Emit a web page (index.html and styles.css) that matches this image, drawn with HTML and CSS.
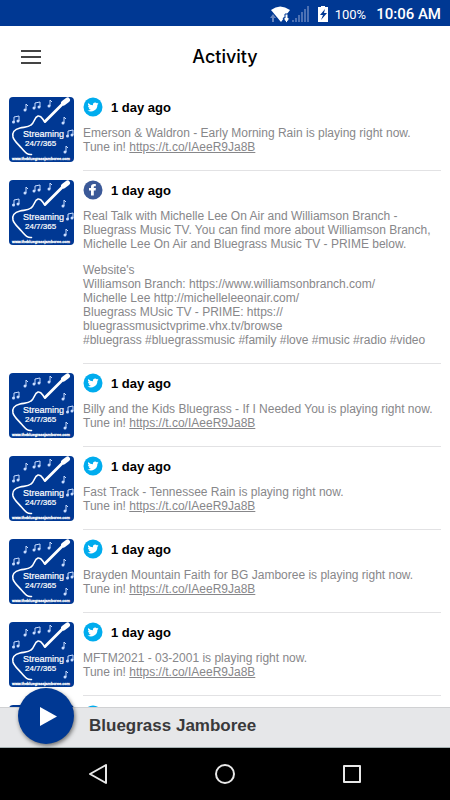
FILE: index.html
```html
<!DOCTYPE html>
<html lang="en">
<head>
<meta charset="utf-8">
<meta name="viewport" content="width=device-width, initial-scale=1">
<title>Activity</title>
<link rel="stylesheet" href="styles.css">
</head>
<body>
<svg class="sprite" aria-hidden="true">
  <symbol id="cover" viewBox="0 0 65 65">
    <rect width="65" height="65" fill="#003893"/>
    <g fill="none" stroke="#fff" stroke-linecap="round" stroke-linejoin="round">
      <path stroke-width="1.6" d="M22.500 57.500C18 58 16 55 12.700 51.300C9 47 5 44 4 40C3 35 5 32.500 11 31C15 30 19 30.500 22 28C26 25 25 20.500 29 19C33 18.500 33 22 36 25"/>
      <path stroke-width="2.800" d="M36 24.500L54 6.500"/>
      <path stroke-width="5" d="M54.500 6L58.500 3"/>
    </g>
    <g fill="none" stroke="#c8dcff" stroke-width="1">
      <path d="M17 13V7L19 9M26 11V6L31 5V10M41 9V3L43 5M5 25V20L10 19V24M55 26V20L57 22M59 39V34L64 33V38M57 55V49L59 51"/>
    </g>
    <g fill="#c8dcff">
      <circle cx="16" cy="13" r="1.500"/><circle cx="25" cy="11" r="1.500"/><circle cx="30" cy="10" r="1.500"/><circle cx="40" cy="9" r="1.500"/><circle cx="4.500" cy="25" r="1.500"/><circle cx="9" cy="24" r="1.500"/><circle cx="54" cy="26" r="1.500"/><circle cx="58.500" cy="39" r="1.500"/><circle cx="63" cy="38" r="1.500"/><circle cx="56" cy="55" r="1.500"/>
    </g>
    <g class="cover-text" fill="#fff" stroke="#fff">
      <text x="14" y="40" font-size="9" stroke-width=".2">Streaming</text>
      <text x="16" y="49" font-size="8" stroke-width=".2">24/7/365</text>
      <text x="3" y="63" font-size="4" stroke-width=".3">www.thebluegrassjamboree.com</text>
    </g>
  </symbol>
  <symbol id="twitter" viewBox="0 0 20 20">
    <circle cx="10" cy="10" r="9.500" fill="#00acee"/>
    <path fill="#fff" transform="translate(4.500 4.500) scale(.46)" d="M24 4.600a10 10 0 0 1-2.800.8 5 5 0 0 0 2.100-2.700 10 10 0 0 1-3.100 1.200 4.900 4.900 0 0 0-8.400 4.500A14 14 0 0 1 1.700 3.200a4.900 4.900 0 0 0 1.500 6.500A4.900 4.900 0 0 1 1 9.100a4.900 4.900 0 0 0 3.900 4.900 5 5 0 0 1-2.200.1 4.900 4.900 0 0 0 4.600 3.400A9.900 9.900 0 0 1 0 19.500 14 14 0 0 0 21.500 7.100 10 10 0 0 0 24 4.600z"/>
  </symbol>
  <symbol id="facebook" viewBox="0 0 20 20">
    <circle cx="10" cy="10" r="9.500" fill="#3b5998"/>
    <path fill="#fff" d="M8 15.500V10.500H6V8H8V6.800C8 4.800 9 4 11 4H12.800V6.300H11.700C11 6.300 10.800 6.500 10.800 7V8H12.900L12.600 10.500H10.800V15.500Z"/>
  </symbol>
</svg>
<div class="phone">
  <div class="status">
    <svg class="signals" viewBox="0 0 64 20" aria-hidden="true">
      <path fill="#fff" d="M0 6Q9-1 19 6L10 18Z"/>
      <path fill="#6684bd" d="M2 10L5 14H3V18H1V14H-1Z"/>
      <path stroke="#003893" stroke-width="1" fill="#fff" d="M14 10H17V14H19L15.500 19L12 14H14Z"/>
      <path fill="#4b70b3" d="M21 18V16H23V18ZM24 18V14H26V18ZM27 18V11H29V18ZM30 18V8H32V18ZM33 18V5H35V18ZM36 18V2H38V18Z"/>
      <path fill="#fff" d="M50 3V2H54V3H57V18H47V3Z"/>
      <path fill="#003893" d="M54 5L49 11H52L50 16L56 9H53Z"/>
    </svg>
    <span class="battery">100%</span>
    <span class="clock">10:06 AM</span>
  </div>
  <header class="bar">
    <button class="menu" type="button" aria-label="Menu"><svg viewBox="0 0 20 14"><path stroke="#444" stroke-width="2" d="M0 1H20M0 7H20M0 13H20"/></svg></button>
    <h1>Activity</h1>
  </header>
  <main class="feed">
    <article class="post"><svg class="cover"><use href="#cover"/></svg><div class="content"><div class="meta"><svg class="badge"><use href="#twitter"/></svg><time>1 day ago</time></div><p>Emerson &amp; Waldron - Early Morning Rain is playing right now.<br>Tune in! <a href="#">https://t.co/IAeeR9Ja8B</a></p></div></article>
    <article class="post"><svg class="cover"><use href="#cover"/></svg><div class="content"><div class="meta"><svg class="badge"><use href="#facebook"/></svg><time>1 day ago</time></div><p>Real Talk with Michelle Lee On Air and Williamson Branch - Bluegrass Music TV. You can find more about Williamson Branch, Michelle Lee On Air and Bluegrass Music TV - PRIME below.</p><p>Website's<br>Williamson Branch: https://www.williamsonbranch.com/<br>Michelle Lee http://michelleleeonair.com/<br>Bluegrass MUsic TV - PRIME: https://<br>bluegrassmusictvprime.vhx.tv/browse<br>#bluegrass #bluegrassmusic #family #love #music #radio #video</p></div></article>
    <article class="post"><svg class="cover"><use href="#cover"/></svg><div class="content"><div class="meta"><svg class="badge"><use href="#twitter"/></svg><time>1 day ago</time></div><p>Billy and the Kids Bluegrass - If I Needed You is playing right now.<br>Tune in! <a href="#">https://t.co/IAeeR9Ja8B</a></p></div></article>
    <article class="post"><svg class="cover"><use href="#cover"/></svg><div class="content"><div class="meta"><svg class="badge"><use href="#twitter"/></svg><time>1 day ago</time></div><p>Fast Track - Tennessee Rain is playing right now.<br>Tune in! <a href="#">https://t.co/IAeeR9Ja8B</a></p></div></article>
    <article class="post"><svg class="cover"><use href="#cover"/></svg><div class="content"><div class="meta"><svg class="badge"><use href="#twitter"/></svg><time>1 day ago</time></div><p>Brayden Mountain Faith for BG Jamboree is playing right now.<br>Tune in! <a href="#">https://t.co/IAeeR9Ja8B</a></p></div></article>
    <article class="post"><svg class="cover"><use href="#cover"/></svg><div class="content"><div class="meta"><svg class="badge"><use href="#twitter"/></svg><time>1 day ago</time></div><p>MFTM2021 - 03-2001 is playing right now.<br>Tune in! <a href="#">https://t.co/IAeeR9Ja8B</a></p></div></article>
    <article class="post"><svg class="cover" viewBox="0 0 65 65"><rect width="65" height="65" fill="#003893"/></svg><div class="content"><div class="meta"><svg class="badge"><use href="#twitter"/></svg></div></div></article>
  </main>
  <footer class="player">
    <button class="play" type="button" aria-label="Play"><svg viewBox="0 0 56 56"><path fill="#fff" d="M22 19L39 28.500L22 38Z"/></svg></button>
    <strong>Bluegrass Jamboree</strong>
  </footer>
  <nav class="keys">
    <button type="button" aria-label="Back"><svg viewBox="0 0 20 20"><path d="M18 1V19L2 10Z"/></svg></button>
    <button type="button" aria-label="Home"><svg viewBox="0 0 20 20"><circle cx="10" cy="10" r="9"/></svg></button>
    <button type="button" aria-label="Recent apps"><svg viewBox="0 0 20 20"><path d="M2 2H18V18H2Z"/></svg></button>
  </nav>
</div>
</body>
</html>
```
FILE: styles.css
```css
* { box-sizing: border-box; }
body { margin: 0; background: #fff; color: #000; font-family: "Liberation Sans", Arial, sans-serif; }
button { display: flex; padding: 0; border: 0; background: none; cursor: pointer; }
.sprite { position: absolute; width: 0; height: 0; }
.phone { display: flex; flex-direction: column; height: 100vh; overflow: hidden; }
.status { display: flex; flex: none; align-items: center; justify-content: flex-end; height: 26px; padding: 2px 9px 0 0; background: #003893; color: #fff; font-family: Roboto, sans-serif; }
.signals { width: 64px; height: 20px; overflow: visible; }
.battery { font-size: 13px; }
.clock { margin-left: 10px; font-size: 15px; font-weight: 500; }
.bar { display: grid; flex: none; grid-template-columns: 62px 1fr 62px; align-items: center; height: 62px; }
.menu { justify-content: center; }
.menu svg { width: 20px; height: 14px; }
.bar h1 { margin: 0; text-align: center; font: 500 18px/24px Inter, sans-serif; }
.feed { flex: 1; min-height: 0; overflow: hidden; }
.post { display: flex; gap: 9px; padding-left: 9px; }
.cover { flex: none; width: 65px; height: 65px; margin-top: 9px; border-radius: 4px; }
.cover-text { font-family: "Liberation Sans", Arial, sans-serif; }
.content { flex: 1; min-width: 0; margin-right: 9px; padding: 9px 0 16px; border-bottom: 1px solid #e2e2e4; }
.meta { display: flex; align-items: center; gap: 8px; height: 20px; margin-bottom: 9px; font-size: 13px; font-weight: 700; }
.badge { width: 20px; height: 20px; }
.content p { margin: 0; color: #87878a; font-size: 12px; line-height: 14px; }
.content p + p { margin-top: 12px; }
.content a { color: inherit; }
.player { display: flex; flex: none; align-items: center; gap: 15px; height: 41px; padding-left: 18px; border-top: 1px solid #d0d1d3; border-bottom: 1px solid #a4b0b2; background: #e6e7e9; color: #39393b; font-size: 17px; z-index: 1; }
.player strong { padding-bottom: 3px; }
.play { flex: none; width: 56px; height: 56px; margin-top: -24px; border-radius: 50%; background: #003893; box-shadow: 1px 2px 4px #0008; }
.play svg { width: 56px; height: 56px; }
.keys { display: flex; flex: none; align-items: center; justify-content: center; gap: 107px; height: 52px; background: #000; }
.keys svg { width: 20px; height: 20px; fill: none; stroke: #e8e8e8; stroke-width: 2; stroke-linejoin: round; }
```
